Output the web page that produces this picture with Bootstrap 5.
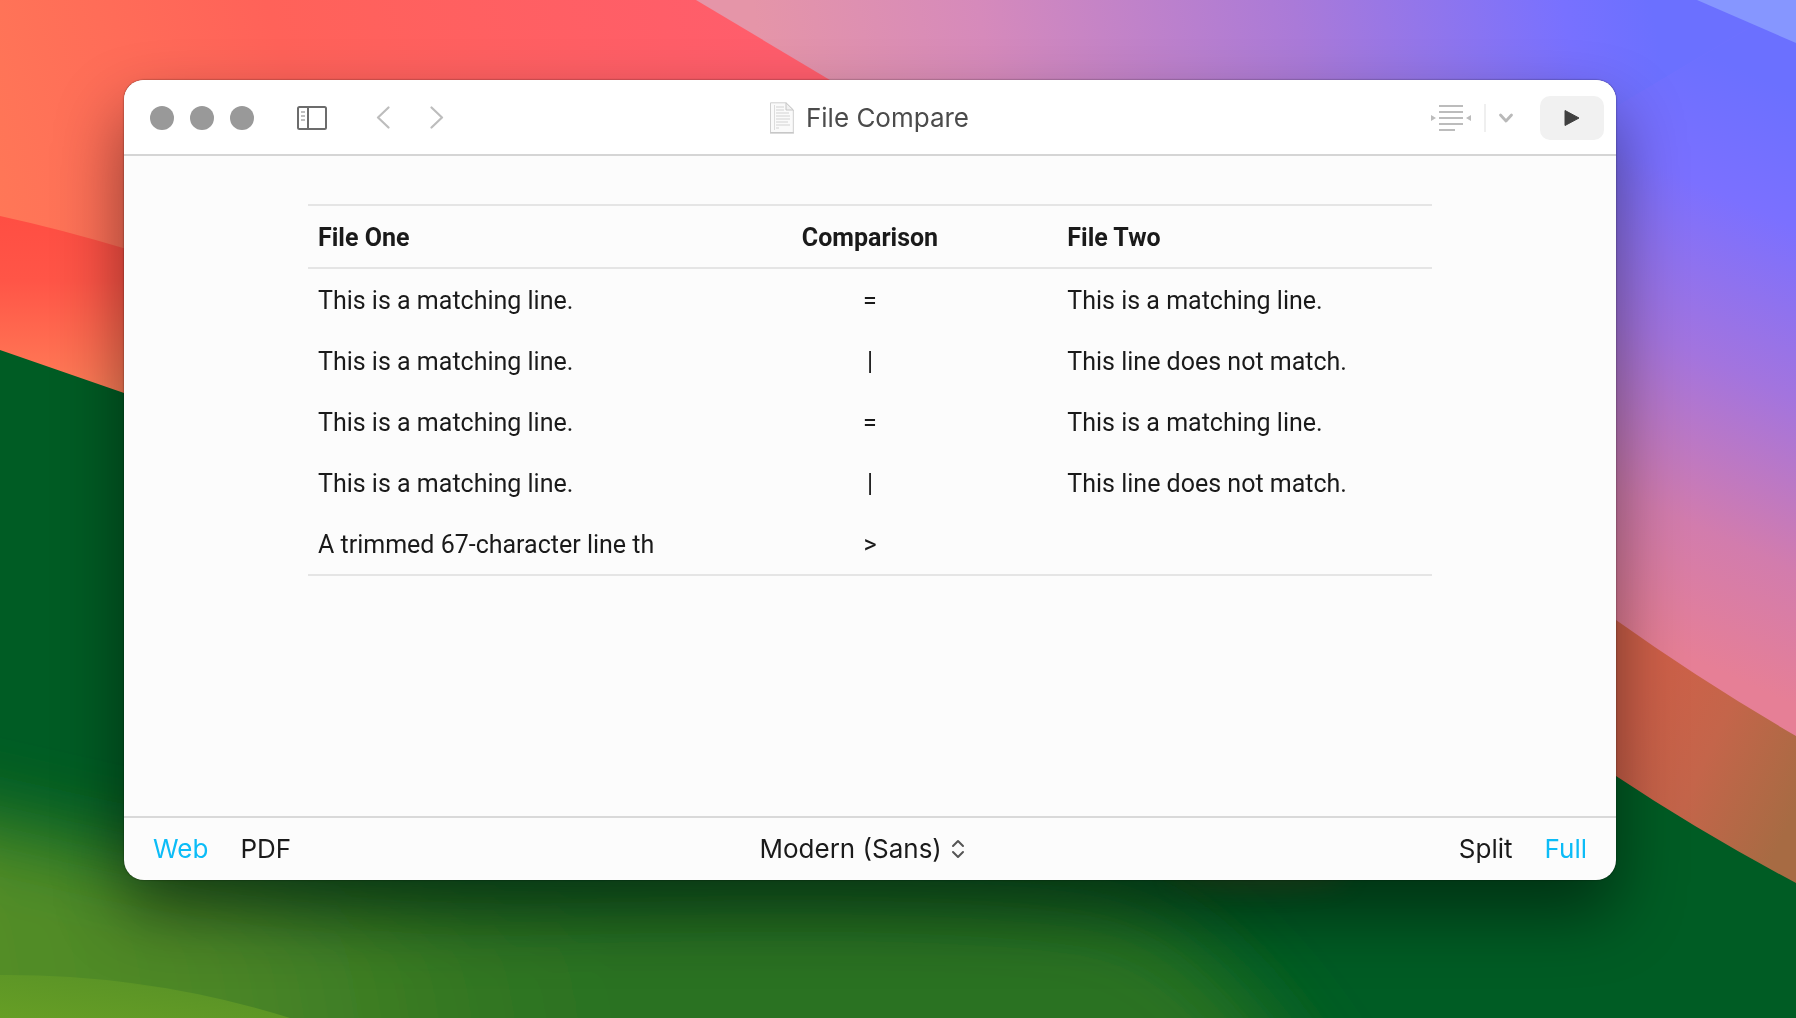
<!DOCTYPE html>
<html lang="en">
<head>
<meta charset="utf-8">
<meta name="viewport" content="width=device-width, initial-scale=1">
<title>File Compare</title>
<link href="https://cdn.jsdelivr.net/npm/bootstrap@5.3.0/dist/css/bootstrap.min.css" rel="stylesheet">
<style>
  body { font-family: Inter, "Liberation Sans", sans-serif; color: #1a1a1a; }
  .wallpaper { z-index: -1; }
  .desktop { padding: 80px 180px 138px 124px; }
  .app-window {
    background: #fcfcfc;
    border-radius: 20px;
    box-shadow: 0 0 2px rgba(0, 0, 0, .6), 0 34px 68px rgba(0, 0, 0, .46);
  }
  .titlebar { height: 76px; padding-top: 2px; background: #fff; border-bottom: 2px solid #d5d5d5; }
  .side { flex: 1 1 0; }
  .titlebar .side:first-child { padding-left: 26px; }
  .titlebar .side:last-child { padding-right: 12px; }
  .plain { border: 0; padding: 0; background: none; color: inherit; display: flex; align-items: center; }
  .light { border: 0; padding: 0; width: 24px; height: 24px; border-radius: 50%; background: #999; }
  .lights { gap: 16px; margin-right: 42px; }
  .arrows { gap: 40px; }
  .doc-title { font-size: 26px; line-height: 32px; font-weight: 400; color: #4b4b4b; gap: 11px; }
  .play { width: 64px; height: 44px; border-radius: 10px; background: #f1f1f1; justify-content: center; margin-left: 26px; }
  .split-line { width: 2px; height: 28px; background: #efefef; margin: 0 12px; }
  .preview { padding: 48px 184px; }
  .compare { --bs-table-bg: transparent; --bs-table-color: #1a1a1a; table-layout: fixed; font-family: Roboto, "Liberation Sans", sans-serif; font-size: 25px; line-height: 31px; border-bottom: 2px solid #e5e5e5; }
  .compare th, .compare td { padding: 16px 10px 14px; border: 0; }
  .compare thead { border-top: 2px solid #e5e5e5; border-bottom: 2px solid #e5e5e5; }
  .statusbar { height: 64px; border-top: 2px solid #d9d9d9; padding: 0 29px; font-size: 26px; line-height: 32px; }
  .statusbar .side { gap: 32px; }
  .statusbar .active { color: #0cbcf7; }
  .style-picker { appearance: none; border: 0; padding: 0; background: none; color: inherit; }
</style>
<script src="https://cdn.jsdelivr.net/npm/bootstrap@5.3.0/dist/js/bootstrap.bundle.min.js"></script>
</head>
<body>
<svg class="wallpaper position-fixed top-0 start-0 w-100 h-100" viewBox="0 0 1796 1018" preserveAspectRatio="none" aria-hidden="true">
  <defs>
    <linearGradient id="sky" gradientUnits="userSpaceOnUse" x1="1120" y1="520" x2="1560" y2="60">
      <stop offset="0" stop-color="#e88096"/><stop offset=".2" stop-color="#e48f9f"/><stop offset=".45" stop-color="#c880c0"/><stop offset=".75" stop-color="#9b74e4"/><stop offset="1" stop-color="#7670ff"/>
    </linearGradient>
    <linearGradient id="skyTop" gradientUnits="userSpaceOnUse" x1="770" y1="100" x2="1640" y2="-60">
      <stop offset="0" stop-color="#e595a8"/><stop offset=".25" stop-color="#d68abb"/><stop offset=".6" stop-color="#aa7ad8"/><stop offset=".9" stop-color="#7871ff"/><stop offset="1" stop-color="#6b70ff"/>
    </linearGradient>
    <linearGradient id="skySide" gradientUnits="userSpaceOnUse" x1="1790" y1="90" x2="1560" y2="600">
      <stop offset="0" stop-color="#6b70ff"/><stop offset=".22" stop-color="#7b70ff"/><stop offset=".5" stop-color="#a374de"/><stop offset=".78" stop-color="#d27cad"/><stop offset="1" stop-color="#e67f96"/>
    </linearGradient>
    <linearGradient id="coral" gradientUnits="userSpaceOnUse" x1="0" y1="220" x2="760" y2="0">
      <stop offset="0" stop-color="#ff7757"/><stop offset=".4" stop-color="#ff6259"/><stop offset="1" stop-color="#ff5d6c"/>
    </linearGradient>
    <linearGradient id="red" x1="0" y1="0" x2="0" y2="1">
      <stop offset="0" stop-color="#ff4e43"/><stop offset=".35" stop-color="#ff5547"/><stop offset="1" stop-color="#ff8159"/>
    </linearGradient>
    <linearGradient id="rust" gradientUnits="userSpaceOnUse" x1="1640" y1="700" x2="1810" y2="780">
      <stop offset="0" stop-color="#cf6049"/><stop offset=".45" stop-color="#c4654a"/><stop offset="1" stop-color="#a76b43"/>
    </linearGradient>
    <linearGradient id="grass" gradientUnits="userSpaceOnUse" x1="0" y1="900" x2="600" y2="800">
      <stop offset="0" stop-color="#528d28"/><stop offset=".3" stop-color="#4d8726"/><stop offset=".8" stop-color="#2f7423"/><stop offset="1" stop-color="#2a7223"/>
    </linearGradient>
    <linearGradient id="lime" x1="0" y1="1" x2="1" y2="0">
      <stop offset="0" stop-color="#669e25"/><stop offset="1" stop-color="#558f27"/>
    </linearGradient>
    <filter id="soft" x="-20%" y="-50%" width="140%" height="200%"><feGaussianBlur stdDeviation="40"/></filter>
    <filter id="softer" x="-20%" y="-100%" width="140%" height="300%"><feGaussianBlur stdDeviation="12"/></filter>
  </defs>
  <rect width="1796" height="1018" fill="url(#sky)"/>
  <path d="M690 0H1796L1560 140H800z" fill="url(#skyTop)"/>
  <path d="M1796 0L1560 140V760H1796z" fill="url(#skySide)"/>
  <path d="M1697 0H1796V43z" fill="#8696ff"/>
  <path d="M0 0H696L840 86L1200 400L900 600L0 400z" fill="url(#coral)"/>
  <path d="M0 216Q60 229 130 250V400H0z" fill="url(#red)"/>
  <path d="M1500 540L1616 620Q1700 680 1796 736V900L1500 760z" fill="url(#rust)"/>
  <path d="M0 350L124 393L500 560L1400 650L1616 776Q1700 832 1796 883V1018H0z" fill="#005c24"/>
  <path d="M-120 800L60 840Q300 900 600 890Q1000 880 1130 910Q1230 950 1330 1120H-120z" fill="url(#grass)" filter="url(#soft)"/>
  <ellipse cx="1260" cy="875" rx="90" ry="14" fill="#7c4b22" opacity=".3" filter="url(#softer)"/>
  <path d="M0 975Q150 974 290 1018H0z" fill="url(#lime)"/>
</svg>

<div class="desktop min-vh-100 d-flex">
  <main class="app-window flex-grow-1 d-flex flex-column overflow-hidden">
    <header class="titlebar d-flex align-items-center flex-shrink-0">
      <div class="side d-flex align-items-center">
        <div class="lights d-flex">
          <button class="light" aria-label="Close"></button>
          <button class="light" aria-label="Minimize"></button>
          <button class="light" aria-label="Zoom"></button>
        </div>
        <button class="plain" aria-label="Toggle sidebar">
          <svg width="32" height="26" viewBox="0 0 32 26" fill="none" stroke="#6c6c6c" stroke-width="2"><rect x="2" y="2" width="28" height="22" rx="1.5"/><path d="M12 2V24"/><path d="M5 7H9M5 11H9M5 15H9" stroke="#aaa" stroke-width="1.5"/></svg>
        </button>
        <div class="arrows d-flex ms-5">
          <button class="plain" aria-label="Back">
            <svg width="14" height="24" viewBox="0 0 14 24" fill="none" stroke="#bdbdbd" stroke-width="2.2" stroke-linecap="round" stroke-linejoin="round"><path d="M12.5 1.500L2 11.500L12.500 21.500"/></svg>
          </button>
          <button class="plain" aria-label="Forward">
            <svg width="14" height="24" viewBox="0 0 14 24" fill="none" stroke="#bdbdbd" stroke-width="2.2" stroke-linecap="round" stroke-linejoin="round"><path d="M1.500 1.500L12 11.500L1.500 21.500"/></svg>
          </button>
        </div>
      </div>
      <h1 class="doc-title d-flex align-items-center m-0 me-3">
        <svg width="26" height="32" viewBox="0 0 26 32"><path d="M1.500 .8H17L24.300 8V30.600H1.500Z" fill="#fafafa" stroke="#cfcfcf"/><path d="M1 31H25" stroke="#bbb"/><path d="M17 .8V8H24.300Z" fill="#f1f1f1" stroke="#c6c6c6"/><path d="M5.500 3V28" stroke="#ddd"/><path d="M7 5H15M7 8H15M7 11H20M7 14H21M7 17H21M7 20H19M7 23H21M7 26H10" stroke="#d2d2d2"/></svg>
        <span>File Compare</span>
      </h1>
      <div class="side d-flex align-items-center justify-content-end">
        <button class="plain" aria-label="Typewriter width">
          <svg width="42" height="28" viewBox="0 0 42 28"><path d="M9 2H33M9 8H33M9 14H33M9 20H33M9 26H25" stroke="#bcbcbc" stroke-width="2"/><path d="M1 11L6 14L1 17ZM41 11L36 14L41 17Z" fill="#bcbcbc"/></svg>
        </button>
        <span class="split-line"></span>
        <button class="plain" aria-label="More options">
          <svg width="16" height="12" viewBox="0 0 16 12" fill="none" stroke="#b9b9b9" stroke-width="2.800" stroke-linecap="round" stroke-linejoin="round"><path d="M2.500 3L8 9L13.500 3"/></svg>
        </button>
        <button class="plain play" aria-label="Play">
          <svg width="16" height="18" viewBox="0 0 16 18"><path d="M1 1.500V16.500L15 9Z" fill="#404040" stroke="#404040" stroke-linejoin="round"/></svg>
        </button>
      </div>
    </header>

    <section class="preview flex-grow-1">
      <table class="table compare m-0">
        <thead>
          <tr><th scope="col">File One</th><th scope="col" class="text-center">Comparison</th><th scope="col">File Two</th></tr>
        </thead>
        <tbody>
          <tr><td>This is a matching line.</td><td class="text-center">=</td><td>This is a matching line.</td></tr>
          <tr><td>This is a matching line.</td><td class="text-center">|</td><td>This line does not match.</td></tr>
          <tr><td>This is a matching line.</td><td class="text-center">=</td><td>This is a matching line.</td></tr>
          <tr><td>This is a matching line.</td><td class="text-center">|</td><td>This line does not match.</td></tr>
          <tr><td>A trimmed 67-character line th</td><td class="text-center">&gt;</td><td></td></tr>
        </tbody>
      </table>
    </section>

    <footer class="statusbar d-flex align-items-center flex-shrink-0">
      <div class="side d-flex">
        <button class="plain active">Web</button>
        <button class="plain">PDF</button>
      </div>
      <div class="d-flex align-items-center gap-2 me-3">
        <select class="style-picker" aria-label="Preview style"><option>Modern (Sans)</option></select>
        <svg width="14" height="20" viewBox="0 0 14 20" fill="none" stroke="#555" stroke-width="2" stroke-linecap="round" stroke-linejoin="round"><path d="M2 7L7 2L12 7M2 13L7 18L12 13"/></svg>
      </div>
      <div class="side d-flex justify-content-end">
        <button class="plain">Split</button>
        <button class="plain active">Full</button>
      </div>
    </footer>
  </main>
</div>
</body>
</html>
